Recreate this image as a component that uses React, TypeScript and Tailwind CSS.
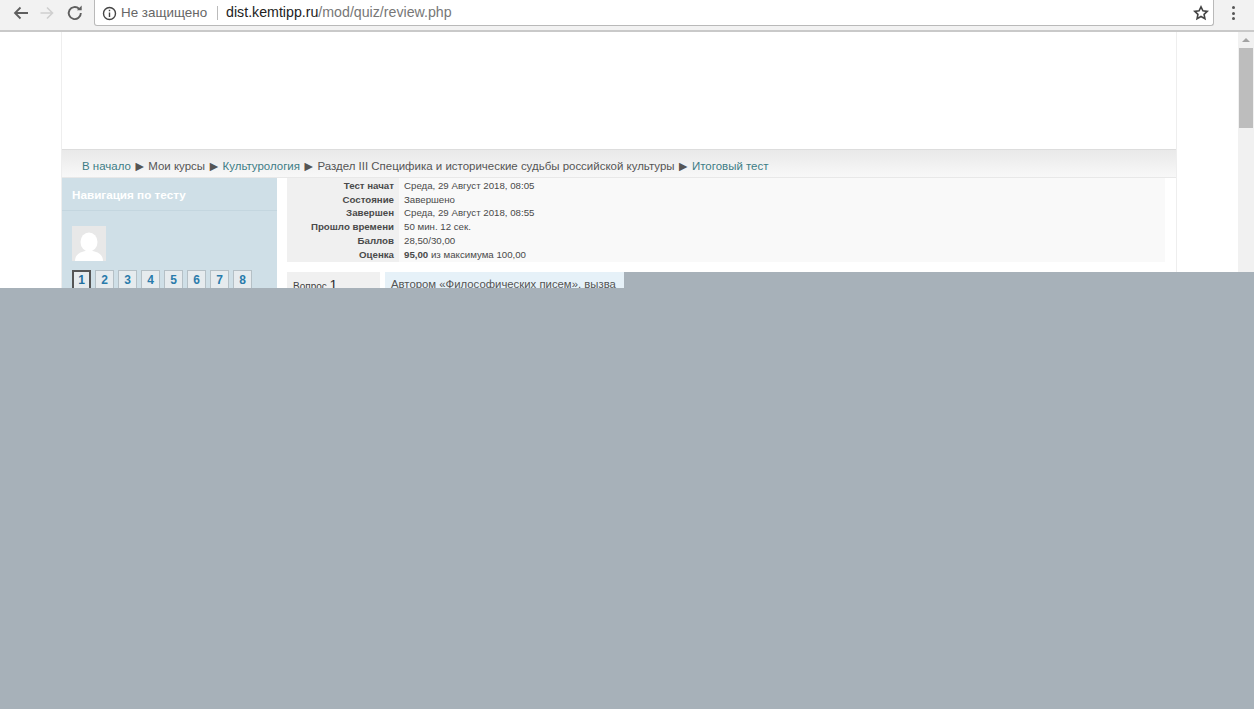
const sans = 'font-["Liberation_Sans",Arial,sans-serif]';

function Sep() {
  return <span className="mx-[1.800px] text-[14px] leading-[16px] text-[#555]">►</span>;
}

const rows: [string, React.ReactNode][] = [
  ["Тест начат", "Среда, 29 Август 2018, 08:05"],
  ["Состояние", "Завершено"],
  ["Завершен", "Среда, 29 Август 2018, 08:55"],
  ["Прошло времени", "50 мин. 12 сек."],
  ["Баллов", "28,50/30,00"],
  ["Оценка", <><b>95,00</b> из максимума 100,00</>],
];

export default function App() {
  return (
    <div className={`relative flex h-[709px] w-[1254px] flex-col overflow-hidden bg-[#a7b1b9] ${sans}`}>
      {/* Browser toolbar */}
      <div className="flex h-[32px] shrink-0 items-start border-b-2 border-[#c9c9c9] bg-[#f2f2f2]">
        <div className="flex h-[26px] w-[94px] items-center pl-[12px] text-[#5a5a5a]">
          <svg width="18" height="18" viewBox="0 0 18 18" fill="none" stroke="#5f5f5f" strokeWidth="1.8">
            <path d="M16 9H3M8.500 3.500 3 9l5.500 5.500" />
          </svg>
          <svg className="ml-[9px]" width="16" height="16" viewBox="0 0 16 16" fill="none" stroke="#cfcfcf" strokeWidth="1.6">
            <path d="M1.500 8h12M8 2.500 13.500 8 8 13.500" />
          </svg>
          <svg className="ml-[11px]" width="18" height="18" viewBox="0 0 17 17" fill="none" stroke="#5f5f5f" strokeWidth="1.8">
            <path d="M14 8.500a5.700 5.700 0 1 1-1.700-4" />
            <path d="M14.800 1.500v4.500h-4.500" fill="#5f5f5f" stroke="none" />
          </svg>
        </div>
        <div className="flex h-[26px] w-[1120px] items-center rounded-b-[3px] border border-t-0 border-[#b9b9b9] bg-white pl-[7px] pr-[4px] pt-[1px]">
          <svg width="15" height="15" viewBox="0 0 15 15" fill="none" stroke="#444" strokeWidth="1.400">
            <circle cx="7.500" cy="7.500" r="6" />
            <path d="M7.500 6.500v4.500M7.500 3.800v1.500" />
          </svg>
          <span className="ml-[4px] text-[13.400px] text-[#666]">Не защищено</span>
          <span className="ml-[10px] h-[14px] w-px bg-[#bbb]" />
          <span className="ml-[8px] text-[14.200px] text-[#222]">dist.kemtipp.ru</span>
          <span className="text-[14.200px] text-[#777]">/mod/quiz/review.php</span>
          <svg className="ml-auto" width="16" height="16" viewBox="0 0 24 24" fill="none" stroke="#444" strokeWidth="2.400">
            <path d="M12 2.800l2.900 6 6.500.8-4.800 4.500 1.300 6.500-5.900-3.300-5.900 3.300 1.300-6.500L2.600 9.600l6.500-.8z" />
          </svg>
        </div>
        <div className="flex h-[26px] flex-1 items-center justify-center pr-[2px]">
          <div className="flex flex-col gap-[2.500px]">
            <span className="h-[3px] w-[3px] rounded-full bg-[#555]" />
            <span className="h-[3px] w-[3px] rounded-full bg-[#555]" />
            <span className="h-[3px] w-[3px] rounded-full bg-[#555]" />
          </div>
        </div>
      </div>

      {/* Page */}
      <div className="flex h-[256px] shrink-0 overflow-hidden bg-white">
        <div className="ml-[61px] w-[1116px] shrink-0 border-x border-[#eeeeee]">
          <div className="h-[118px] border-b border-[#dddddd] bg-white" />
          <div className="flex h-[28px] items-end border-b border-[#e8e8e8] bg-gradient-to-b from-[#e9e9e9] to-[#f8f8f8] pb-[3px] pl-[20px] text-[11.470px] leading-[16px] text-[#555]">
            <span className="text-[#3d7c85]">В начало</span>
            <Sep />
            <span>Мои курсы</span>
            <Sep />
            <span className="text-[#3d7c85]">Культурология</span>
            <Sep />
            <span>Раздел III Специфика и исторические судьбы российской культуры</span>
            <Sep />
            <span className="text-[#3d7c85]">Итоговый тест</span>
          </div>
          <div className="flex">
            <aside className="h-[120px] w-[215px] shrink-0 bg-[#cfdfe7]">
              <div className="h-[33px] border-b border-[#c4d6df] pl-[10px] pt-[10px] text-[11.700px] font-bold leading-[14px] text-white">
                Навигация по тесту
              </div>
              <div className="mt-[15px] ml-[10px] flex h-[35px] w-[34px] items-end justify-center overflow-hidden bg-[#e8e8e8]">
                <svg width="30" height="29" viewBox="0 0 30 29" fill="white">
                  <ellipse cx="15" cy="10" rx="8.500" ry="9.500" />
                  <path d="M1 29c0-7 6-9 10-10h8c4 1 10 3 10 10z" />
                </svg>
              </div>
              <div className="ml-[10px] mt-[9px] flex gap-[4px]">
                {[1, 2, 3, 4, 5, 6, 7, 8].map((n) => (
                  <div
                    key={n}
                    className={`flex h-[20px] w-[19px] items-center justify-center bg-[#e6ebee] text-[12px] font-bold ${
                      n === 1
                        ? "border-2 border-[#555] text-[#1f6f9f]"
                        : "border border-[#b5c0c6] text-[#2a7bab]"
                    }`}
                  >
                    {n}
                  </div>
                ))}
              </div>
            </aside>
            <main className="min-w-0 flex-1 pl-[10px] pr-[11px]">
              <div className="flex h-[84px] bg-[#f9f9f9] text-[9.700px] leading-[13.700px] text-[#4a4a4a]">
                <div className="w-[112px] shrink-0 bg-[#f0f0f0] pr-[5px] pt-[1px] text-right font-bold">
                  {rows.map(([k]) => (
                    <div key={k}>{k}</div>
                  ))}
                </div>
                <div className="pl-[5px] pt-[1px]">
                  {rows.map(([k, v]) => (
                    <div key={k}>{v}</div>
                  ))}
                </div>
              </div>
              <div className="mt-[10px] flex gap-[5px]">
                <div className="h-[40px] w-[93px] shrink-0 bg-[#f0f0f0] pl-[6px] pt-[5px] text-[10px] leading-[16px] text-[#444]">
                  Вопрос <span className="text-[14px] text-[#333]">1</span>
                </div>
                <div className="h-[40px] flex-1 bg-[#e6f1f8] pl-[6px] pt-[4px] text-[11.350px] leading-[16px] text-[#555] whitespace-nowrap overflow-hidden">
                  Автором «Философических писем», вызва
                </div>
              </div>
            </main>
          </div>
        </div>
        <div className="flex-1 bg-white" />
        <div className="w-[16px] shrink-0 bg-[#f1f1f1]">
          <div className="flex h-[16px] items-center justify-center">
            <div className="h-0 w-0 border-x-[4px] border-b-[4px] border-x-transparent border-b-[#a3a3a3]" />
          </div>
          <div className="mx-auto h-[80px] w-[14px] bg-[#bdbdbd]" />
        </div>
      </div>

      {/* Grey block laid over the page's unpainted part */}
      <div className="absolute left-[624px] top-[272px] h-[16px] w-[630px] bg-[#a7b1b9]" />
    </div>
  );
}
